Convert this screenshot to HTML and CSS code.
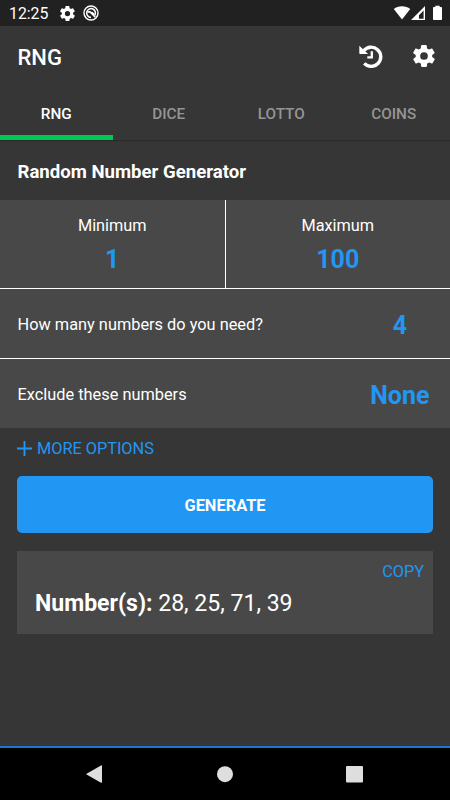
FILE: index.html
```html
<!DOCTYPE html>
<html lang="en">
<head>
<meta charset="utf-8">
<title>RNG</title>
<link rel="stylesheet" href="styles.css">
</head>
<body>
<div class="status">
  <span class="clock">12:25</span>
  <svg class="s-gear" width="15" height="15" viewBox="2 2 20 20"><path fill="#fff" fill-rule="evenodd" d="M19.400 13a7.500 7.500 0 0 0 0-2l2.100-1.600a.5.5 0 0 0 .1-.6l-2-3.500a.5.5 0 0 0-.6-.2l-2.500 1a7.300 7.300 0 0 0-1.700-1l-.4-2.700a.5.5 0 0 0-.5-.4h-4a.5.5 0 0 0-.5.4L9 5.100a7.700 7.700 0 0 0-1.700 1l-2.500-1a.5.5 0 0 0-.6.2l-2 3.500a.5.5 0 0 0 .1.600L4.500 11a8 8 0 0 0 0 2l-2.100 1.600a.5.5 0 0 0-.1.600l2 3.500c.1.200.4.300.6.200l2.500-1c.5.400 1.100.7 1.700 1l.4 2.700c0 .2.200.4.500.4h4c.2 0 .5-.2.500-.4l.4-2.700a7.300 7.300 0 0 0 1.700-1l2.500 1c.2.100.5 0 .6-.2l2-3.500a.5.5 0 0 0-.1-.6zM12 15.500a3.500 3.500 0 1 1 0-7 3.500 3.500 0 0 1 0 7z"/></svg>
  <svg class="s-circle" width="16" height="16" viewBox="0 0 16 16" fill="none" stroke="#fff"><circle cx="8" cy="8" r="7" stroke-width="1.400"/><path d="M11.600 10.600A4.400 4.400 0 1 0 8 12.400" stroke-width="1.500"/><path d="M4.500 7.300l2.300-.6L12.300 12.300M8.500 7.200l2.800 2.200" stroke-width="1.500"/></svg>
  <svg class="s-right" width="52" height="16" viewBox="0 0 52 16"><path fill="#fff" d="M2.800 4C7 .2 15 .2 19.200 4L11 14.500z"/><path fill="#fff" fill-rule="evenodd" d="M34 .9V15H20zM32.600 5.500l-4.600 4.700v3.600h4.600z"/><path fill="#fff" d="M44.300 2V.8h4.400V2h1.500q.8 0 .8.800v11.400q0 .8-.8.800h-7.400q-.8 0-.8-.8V2.800q0-.8.800-.8z"/></svg>
</div>
<header class="appbar">
  <h1>RNG</h1>
  <svg class="history" width="24" height="24" viewBox="0 0 24 24" fill="none" stroke="#fff" stroke-width="3.400"><path d="M4.800 6.600A9.600 9.600 0 1 1 5.200 19.400"/><path fill="#fff" stroke="none" d="M.3 1.700v7.600q0 .8.800.8h8z"/><path d="M12.800 7.300v6H8.300" stroke-width="2.300"/></svg>
  <svg class="gear" width="22" height="22" viewBox="2 2 20 20"><path fill="#fff" fill-rule="evenodd" d="M19.400 13a7.500 7.500 0 0 0 0-2l2.100-1.600a.5.5 0 0 0 .1-.6l-2-3.500a.5.5 0 0 0-.6-.2l-2.500 1a7.300 7.300 0 0 0-1.700-1l-.4-2.700a.5.5 0 0 0-.5-.4h-4a.5.5 0 0 0-.5.4L9 5.100a7.700 7.700 0 0 0-1.700 1l-2.500-1a.5.5 0 0 0-.6.2l-2 3.500a.5.5 0 0 0 .1.600L4.500 11a8 8 0 0 0 0 2l-2.100 1.600a.5.5 0 0 0-.1.600l2 3.500c.1.200.4.300.6.200l2.500-1c.5.400 1.100.7 1.700 1l.4 2.700c0 .2.200.4.500.4h4c.2 0 .5-.2.500-.4l.4-2.700a7.300 7.300 0 0 0 1.700-1l2.500 1c.2.100.5 0 .6-.2l2-3.500a.5.5 0 0 0-.1-.6zM12 15.500a3.500 3.500 0 1 1 0-7 3.500 3.500 0 0 1 0 7z"/></svg>
</header>
<nav class="tabs">
  <span class="tab active">RNG</span><span class="tab">DICE</span><span class="tab">LOTTO</span><span class="tab">COINS</span>
</nav>
<main>
  <h2>Random Number Generator</h2>
  <section class="range">
    <div class="cell"><span>Minimum</span><b>1</b></div>
    <div class="cell"><span>Maximum</span><b>100</b></div>
  </section>
  <div class="row"><span>How many numbers do you need?</span><b class="count">4</b></div>
  <div class="row last"><span>Exclude these numbers</span><b>None</b></div>
  <div class="more"><svg width="15" height="15" viewBox="0 0 15 15"><path d="M7.500 0v15M0 7.500h15" stroke="#2196f3" stroke-width="1.900"/></svg><span>MORE OPTIONS</span></div>
  <button class="generate">GENERATE</button>
  <section class="result">
    <span class="copy">COPY</span>
    <p><b>Number(s):</b> 28, 25, 71, 39</p>
  </section>
</main>
<footer class="navbar">
  <svg width="17" height="19" viewBox="0 0 17 19"><path fill="#dedede" d="M.6 8.700L15 .4q1-.4 1 .7v16q0 1-1 .6L.6 9.500q-.6-.4 0-.8z"/></svg>
  <svg width="17" height="17" viewBox="0 0 17 17"><circle cx="9" cy="8.200" r="8" fill="#dedede"/></svg>
  <svg width="17" height="17" viewBox="0 0 17 17"><rect width="17" height="16.500" rx="1" fill="#dedede"/></svg>
</footer>
</body>
</html>
```
FILE: styles.css
```css
* { box-sizing: border-box; }
body {
  margin: 0;
  width: 450px;
  height: 800px;
  display: flex;
  flex-direction: column;
  overflow: hidden;
  background: #363636;
  color: #fff;
  font-family: Roboto, sans-serif;
  white-space: nowrap;
}
h1, h2, p { margin: 0; }
svg { display: block; flex: none; }
b { font-weight: 700; }
.status {
  height: 26px;
  flex: none;
  display: flex;
  align-items: center;
  padding: 0 7px 0 9px;
  background: #212121;
}
.clock { width: 51px; font-size: 15.800px; line-height: 26px; padding-top: 2px; }
.s-circle { margin-left: 8px; }
.s-right { margin-left: auto; }
.appbar {
  height: 64px;
  flex: none;
  display: flex;
  align-items: center;
  padding: 0 15px 4px 17.500px;
}
h1 { flex: 1; font-size: 22px; font-weight: 500; line-height: 26px; padding-top: 4px; }
.history { margin-right: 30px; }
.tabs {
  height: 50px;
  flex: none;
  display: grid;
  grid-template-columns: repeat(4, 1fr);
  box-shadow: 0 1px 1px #2a2a2a;
}
.tab {
  height: 50px;
  padding-top: 4px;
  font-size: 15.300px;
  line-height: 41px;
  font-weight: 500;
  text-align: center;
  color: #959595;
}
.tab.active { color: #fff; border-bottom: 5px solid #00c853; }
main { flex: 1; display: flex; flex-direction: column; }
h2 { height: 60px; padding: 2px 17.500px 0; font-size: 18.600px; font-weight: 700; line-height: 60px; }
.range {
  height: 89px;
  display: grid;
  grid-template-columns: 225.500px 224.500px;
  background: #484848;
  border-bottom: 1px solid #fff;
}
.cell { display: flex; flex-direction: column; align-items: center; font-size: 16.300px; }
.cell:first-child { border-right: 1px solid #fff; }
.cell span { line-height: 20px; margin-top: 16px; }
.cell b { line-height: 30px; margin-top: 9px; }
b { font-size: 25px; }
.cell b, .row b { color: #2196f3; }
.row {
  height: 70px;
  display: flex;
  align-items: center;
  justify-content: space-between;
  padding: 2px 20.500px 0 17.500px;
  font-size: 16.350px;
  background: #484848;
  border-bottom: 1px solid #fff;
}
.row b { padding-top: 1px; }
.row.last { height: 69px; border-bottom: 0; }
.row .count { width: 59px; text-align: center; }
.more {
  height: 48px;
  display: flex;
  align-items: center;
  gap: 5px;
  padding: 0 0 8px 17px;
  color: #2196f3;
  font-size: 16.300px;
}
.more span { padding-top: 1px; }
.generate {
  height: 57px;
  margin: 0 17px;
  padding: 2px 0 0;
  border: 0;
  border-radius: 5px;
  background: #2196f3;
  color: #fff;
  font: 700 16.400px Roboto, sans-serif;
}
.result {
  height: 83px;
  margin: 18px 17px 0;
  display: flex;
  flex-direction: column;
  background: #484848;
}
.copy { align-self: flex-end; margin: 11px 9px 0 0; font-size: 16.300px; line-height: 20px; color: #2196f3; }
.result p { margin: 7px 0 0 18px; font-size: 23.050px; line-height: 30px; }
.result b { font-size: 23.050px; }
.navbar {
  height: 54px;
  flex: none;
  display: flex;
  align-items: center;
  justify-content: space-between;
  padding: 0 87px 0 86px;
  border-top: 2px solid #1976d2;
  background: #000;
}
```
